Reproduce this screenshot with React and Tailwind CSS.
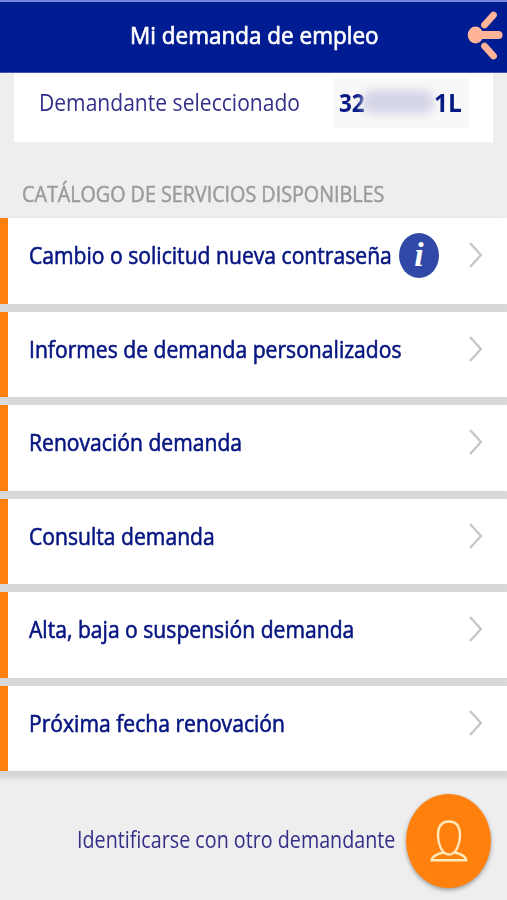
import React from 'react';

const servicios = [
    { id: 1, titulo: 'Cambio o solicitud nueva contraseña', info: true },
    { id: 2, titulo: 'Informes de demanda personalizados' },
    { id: 3, titulo: 'Renovación demanda' },
    { id: 4, titulo: 'Consulta demanda' },
    { id: 5, titulo: 'Alta, baja o suspensión demanda' },
    { id: 6, titulo: 'Próxima fecha renovación' },
];

function Chevron() {
    return (
        <svg className="h-[28px] w-[16px] shrink-0" viewBox="0 0 16 28" fill="none">
            <path d="M2 2 L13 14 L2 26" stroke="#c6c6c6" strokeWidth="2.3" />
        </svg>
    );
}

function InfoBadge() {
    return (
        <span className="flex h-[45px] w-[40px] shrink-0 items-center justify-center rounded-[50%] bg-[#3048a6] pb-[2px] font-['Liberation_Serif',serif] text-[34px] leading-none font-bold text-white italic">
            i
        </span>
    );
}

function ServicioRow({ servicio }) {
    return (
        <li className="flex h-[85.5px] items-start border-l-8 border-[#ff800c] bg-white pr-[23px] pl-[21px] shadow-[0_1px_8px_rgba(0,0,0,0.05)]">
            <div className="relative flex h-[74px] w-full items-center justify-between">
                <span className="w-[370px] whitespace-nowrap">
                    <span className="inline-block origin-left scale-x-[0.88] text-[24px] leading-[34px] text-[#061580] [-webkit-text-stroke:0.6px_#061580]">
                        {servicio.titulo}
                    </span>
                </span>
                {servicio.info && (
                    <span className="absolute top-[15px] left-[370px]">
                        <InfoBadge />
                    </span>
                )}
                <Chevron />
            </div>
        </li>
    );
}

export default function App() {
    return (
        <div className="h-[900px] w-[507px] overflow-hidden bg-[#eeeeee] font-['Open_Sans',sans-serif]">
            <header className="flex h-[73px] items-start border-t-2 border-b border-t-[#7388dc] border-b-[#4054b0] bg-[#001c92] pt-[16px] pl-[130px]">
                <h1 className="w-[337px] shrink-0 whitespace-nowrap">
                    <span className="inline-block origin-left scale-x-[0.937] text-[24px] leading-[34px] text-white [-webkit-text-stroke:0.7px_#fff]">
                        Mi demanda de empleo
                    </span>
                </h1>
                <svg className="-mt-[9px] h-[52px] w-[38px] shrink-0" viewBox="0 0 38 52" fill="none" stroke="#ffb49a" strokeLinecap="round">
                    <ellipse cx="8.5" cy="26" rx="7.8" ry="8.5" fill="#ffb49a" stroke="none" />
                    <path d="M9 26 H31.5" strokeWidth="8" />
                    <path d="M17.5 16 L26.5 6 M17.5 37 L26.5 47" strokeWidth="6.8" />
                </svg>
            </header>

            <section className="mx-[14px] flex h-[69px] items-start bg-white pt-[5px] pl-[25px]">
                <span className="mt-[7px] w-[294px] whitespace-nowrap">
                    <span className="inline-block origin-left scale-x-[0.878] text-[24px] leading-[34px] text-[#34308a]">
                        Demandante seleccionado
                    </span>
                </span>
                <div className="flex h-[50px] w-[136px] items-center bg-[#f8f8f8] pb-[2px] pl-[6px] text-[25px] leading-[34px] font-bold text-[#071a83]">
                    <span className="inline-block w-[26px] origin-left scale-x-[0.9]">32</span>
                    <span className="-ml-[3px] h-[24px] w-[72px] rounded-[10px] bg-[#d5d5e8] blur-[4px]" />
                    <span className="inline-block origin-left scale-x-[0.98]">1L</span>
                </div>
            </section>

            <h2 className="mt-[34px] h-[42px] pl-[22px] whitespace-nowrap">
                <span className="inline-block origin-left scale-x-[0.896] text-[22px] leading-[34px] text-[#9b9b9b] [-webkit-text-stroke:0.5px_#9b9b9b]">
                    CATÁLOGO DE SERVICIOS DISPONIBLES
                </span>
            </h2>

            <ul className="flex flex-col gap-[8px] bg-[#dcdcdc]">
                {servicios.map((servicio) => (
                    <ServicioRow key={servicio.id} servicio={servicio} />
                ))}
            </ul>

            <footer className="flex h-[128px] items-start bg-gradient-to-b from-[#d9d9d9] from-[5px] to-[#eeeeee] to-[11px] pl-[77px]">
                <span className="mt-[51px] w-[329px] shrink-0 whitespace-nowrap">
                    <span className="inline-block origin-left scale-x-[0.857] text-[23px] leading-[34px] text-[#34308a]">
                        Identificarse con otro demandante
                    </span>
                </span>
                <button className="mt-[23px] flex h-[94px] w-[85px] shrink-0 items-center justify-center rounded-[50%] bg-[#ff800c] shadow-[0_2px_4px_rgba(0,0,0,0.35)]">
                    <svg className="h-[42px] w-[38px]" viewBox="0 0 38 42" fill="none" stroke="#ffe9ba" strokeWidth="2.4" strokeLinejoin="round">
                        <path d="M19 34.5 C12 34.5 8 24 8 15.5 C8 6.5 12 1.5 19 1.5 C26 1.5 30 6.5 30 15.5 C30 24 26 34.5 19 34.5 Z" />
                        <path d="M13.5 32.5 C7 34 2 36.5 1.5 40.3 H36.5 C36 36.5 31 34 24.5 32.5" />
                    </svg>
                </button>
            </footer>
        </div>
    );
}
